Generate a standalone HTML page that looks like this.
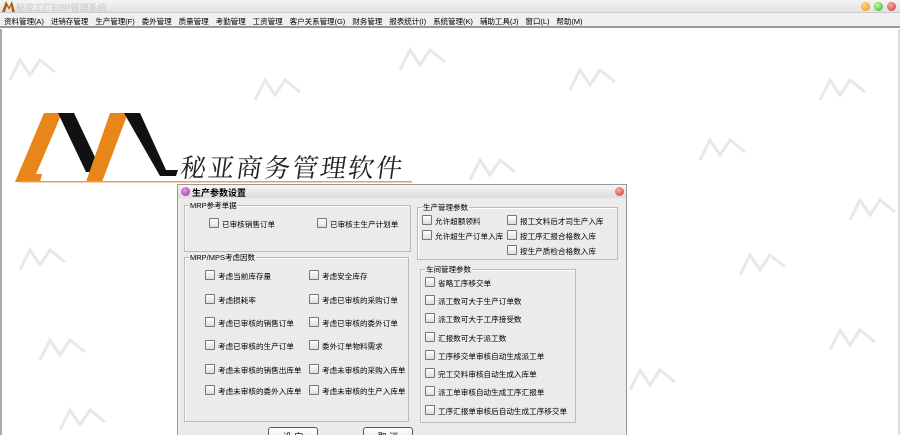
<!DOCTYPE html>
<html><head><meta charset="utf-8"><style>
*{margin:0;padding:0;box-sizing:border-box}
html,body{width:900px;height:435px;overflow:hidden}
body{background:#fff;font-family:"Liberation Sans","Noto Sans CJK SC",sans-serif;font-size:9px;color:#000;position:relative}
.title{position:absolute;left:0;top:0;width:900px;height:13px;background:linear-gradient(#f4f4f4,#e2e2e2);border-bottom:1px solid #ccc}
.title span{position:absolute;left:16px;top:1px;color:#c8c8c8;font-size:9px}
.menu{position:absolute;left:0;top:13px;width:900px;height:15px;background:#f0f0f0;border-bottom:2px solid #999;white-space:nowrap;font-size:7.6px;padding:3px 0 0 4px;letter-spacing:-0.1px}
.menu b{font-weight:normal;margin-right:7px}
.frame{position:absolute;left:0;top:29px;width:900px;height:406px;border-left:2px solid #aaa;border-right:2px solid #ddd}
.dlg{position:absolute;left:177px;top:184px;width:450px;height:255px;background:#ecebea;border:1px solid #999;overflow:hidden}
.dt{height:13px;background:linear-gradient(#f6f6f6,#dcdcdc);font-weight:bold;font-size:9px;padding:1px 0 0 14px;position:relative}
.g{position:absolute;border:1px solid #bbb;box-shadow:inset 1px 1px #fff}
.g>.l{position:absolute;top:-6px;left:4px;background:#ecebea;font-size:7.5px;padding:0 1px}
.c{position:absolute;white-space:nowrap;font-size:7.6px}
.c:before{content:"";display:inline-block;width:8px;height:8px;border:1px solid #777;background:linear-gradient(#fff,#ddd);margin-right:3px;vertical-align:-1px;border-radius:1px}
.btn{position:absolute;top:242px;width:50px;height:18px;border:1px solid #557;border-radius:3px;background:linear-gradient(#fff,#e5e5e5);text-align:center;padding-top:2px}
.dot{position:absolute;width:9px;height:9px;border-radius:50%;top:2px}
</style></head><body>
<div class="title"><svg style="position:absolute;left:2px;top:1px" width="13" height="11"><path d="M0 11 L4 0 L7 6 L10 0 L13 11 L10 11 L9 5 L7 9 L5 5 L3 11Z" fill="#b06010"/></svg><span>秘亚工厂ERP管理系统</span>
<div class="dot" style="left:861px;background:radial-gradient(circle at 40% 35%,#fd8,#e80)"></div>
<div class="dot" style="left:874px;background:radial-gradient(circle at 40% 35%,#bf9,#3a2)"></div>
<div class="dot" style="left:887px;background:radial-gradient(circle at 40% 35%,#faa,#c33)"></div></div>
<div class="menu"><b>资料管理(A)</b><b>进销存管理</b><b>生产管理(F)</b><b>委外管理</b><b>质量管理</b><b>考勤管理</b><b>工资管理</b><b>客户关系管理(G)</b><b>财务管理</b><b>报表统计(I)</b><b>系统管理(K)</b><b>辅助工具(J)</b><b>窗口(L)</b><b>帮助(M)</b></div>
<div class="frame"></div>
<svg style="position:absolute;left:0;top:30px" width="900" height="405">
<g fill="none" stroke="#e6e6e6" stroke-width="3" opacity=".9">
<path d="M10 50 l10 -20 l10 15 l10 -15 l15 12"/><path d="M255 70 l10 -20 l10 15 l10 -15 l15 12"/><path d="M400 40 l10 -20 l10 15 l10 -15 l15 12"/><path d="M570 60 l10 -20 l10 15 l10 -15 l15 12"/><path d="M820 70 l10 -20 l10 15 l10 -15 l15 12"/><path d="M700 130 l10 -20 l10 15 l10 -15 l15 12"/><path d="M470 150 l10 -20 l10 15 l10 -15 l15 12"/><path d="M850 190 l10 -20 l10 15 l10 -15 l15 12"/><path d="M740 245 l10 -20 l10 15 l10 -15 l15 12"/><path d="M830 320 l10 -20 l10 15 l10 -15 l15 12"/><path d="M630 360 l10 -20 l10 15 l10 -15 l15 12"/><path d="M20 240 l10 -20 l10 15 l10 -15 l15 12"/><path d="M40 330 l10 -20 l10 15 l10 -15 l15 12"/><path d="M60 400 l10 -20 l10 15 l10 -15 l15 12"/>
</g></svg>
<svg style="position:absolute;left:0;top:100px" width="420" height="90">
<polygon points="15,82 44,13 62,13 36,74 42,74 40,82" fill="#e8861a"/>
<polygon points="58,13 74,13 102,72 86,72" fill="#111"/>
<polygon points="86,82 110,13 128,13 102,82" fill="#e8861a"/>
<polygon points="124,13 140,13 166,70 178,70 176,76 160,76" fill="#111"/>
<rect x="20" y="81" width="392" height="1.5" fill="#e8a060"/>
<text x="180" y="77" font-family="Noto Serif CJK SC,serif" font-size="26" letter-spacing="2" fill="#222" transform="skewX(-8) translate(10 0)">秘亚商务管理软件</text>
</svg>
<div class="dlg">
<div class="dt"><div class="dot" style="left:3px;top:2px;background:radial-gradient(circle at 40% 35%,#e9e,#838)"></div>生产参数设置<div class="dot" style="left:437px;top:2px;background:radial-gradient(circle at 40% 35%,#faa,#c33)"></div></div>
<div class="g" style="left:6px;top:20px;width:227px;height:47px"><span class="l">MRP参考单据</span>
<span class="c" style="left:24px;top:12px">已审核销售订单</span><span class="c" style="left:132px;top:12px">已审核主生产计划单</span></div>
<div class="g" style="left:6px;top:72px;width:225px;height:165px"><span class="l">MRP/MPS考虑因数</span>
<span class="c" style="left:20px;top:12px">考虑当前库存量</span><span class="c" style="left:124px;top:12px">考虑安全库存</span>
<span class="c" style="left:20px;top:36px">考虑损耗率</span><span class="c" style="left:124px;top:36px">考虑已审核的采购订单</span>
<span class="c" style="left:20px;top:59px">考虑已审核的销售订单</span><span class="c" style="left:124px;top:59px">考虑已审核的委外订单</span>
<span class="c" style="left:20px;top:82px">考虑已审核的生产订单</span><span class="c" style="left:124px;top:82px">委外订单物料需求</span>
<span class="c" style="left:20px;top:106px">考虑未审核的销售出库单</span><span class="c" style="left:124px;top:106px">考虑未审核的采购入库单</span>
<span class="c" style="left:20px;top:127px">考虑未审核的委外入库单</span><span class="c" style="left:124px;top:127px">考虑未审核的生产入库单</span></div>
<div class="g" style="left:239px;top:22px;width:201px;height:53px"><span class="l">生产管理参数</span>
<span class="c" style="left:4px;top:7px">允许超额领料</span><span class="c" style="left:89px;top:7px">报工文料后才司生产入库</span>
<span class="c" style="left:4px;top:22px">允许超生产订单入库</span><span class="c" style="left:89px;top:22px">按工序汇报合格数入库</span>
<span class="c" style="left:89px;top:37px">按生产质检合格数入库</span></div>
<div class="g" style="left:242px;top:84px;width:156px;height:154px"><span class="l">车间管理参数</span>
<span class="c" style="left:4px;top:7px">省略工序移交单</span>
<span class="c" style="left:4px;top:25px">派工数可大于生产订单数</span>
<span class="c" style="left:4px;top:43px">派工数可大于工序接受数</span>
<span class="c" style="left:4px;top:62px">汇报数可大于派工数</span>
<span class="c" style="left:4px;top:80px">工序移交单审核自动生成派工单</span>
<span class="c" style="left:4px;top:98px">完工交料审核自动生成入库单</span>
<span class="c" style="left:4px;top:116px">派工单审核自动生成工序汇报单</span>
<span class="c" style="left:4px;top:135px">工序汇报单审核后自动生成工序移交单</span></div>
<div class="btn" style="left:90px">设 定</div><div class="btn" style="left:185px">取 消</div>
</div>
</body></html>
